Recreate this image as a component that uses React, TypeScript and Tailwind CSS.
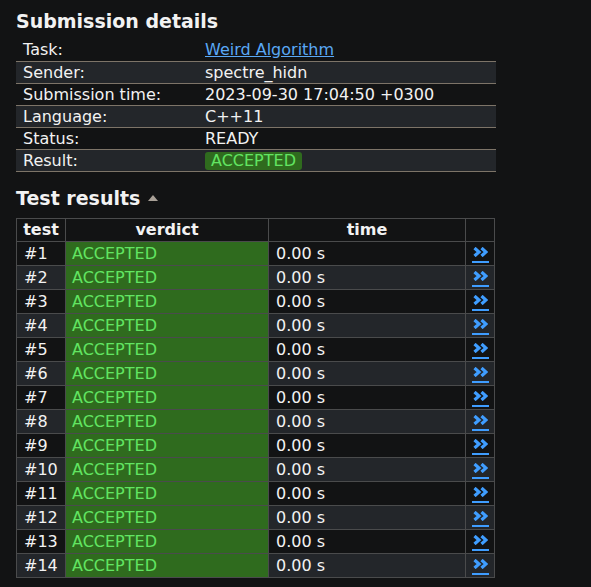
import React from 'react';

const details: [string, React.ReactNode][] = [
  ['Task:', <a href="#" className="text-[#5aa8f5] underline">Weird Algorithm</a>],
  ['Sender:', 'spectre_hidn'],
  ['Submission time:', '2023-09-30 17:04:50 +0300'],
  ['Language:', 'C++11'],
  ['Status:', 'READY'],
  [
    'Result:',
    <span className="inline-block rounded-[3px] bg-[#2f6b1e] px-[6px] leading-[18px] text-[#62e562]">ACCEPTED</span>,
  ],
];

const tests = Array.from({ length: 14 }, (_, i) => i + 1);

function DetailLink() {
  return (
    <a href="#" className="inline-flex flex-col items-center gap-[4px] pt-[5px]">
      <svg width="15" height="10" viewBox="0 0 15 10">
        <path d="M1.5 1 L6 5 L1.5 9 M8.5 1 L13 5 L8.5 9" fill="none" stroke="#3f9dff" strokeWidth="3.2" />
      </svg>
      <span className="block h-[2px] w-[17px] bg-[#3f9dff]" />
    </a>
  );
}

export default function App() {
  return (
    <div
      className="min-h-[587px] w-[591px] bg-[#121314] px-4 pt-[9px] text-[16px] text-[#f2f2f2]"
      style={{ fontFamily: '"DejaVu Sans", Verdana, sans-serif' }}
    >
      <h2 className="text-[19px] font-bold leading-[24px]">Submission details</h2>

      <table className="mt-[6px] w-[480px] border-collapse">
        <tbody>
          {details.map(([k, v], i) => (
            <tr key={i} className={`border-b border-[#7d7468] ${i % 2 === 1 ? 'bg-[#23262a]' : ''}`}>
              <td className="h-[22px] w-[189px] p-0 pl-[7px] leading-[21px]">{k}</td>
              <td className="h-[22px] p-0 leading-[21px]">{v}</td>
            </tr>
          ))}
        </tbody>
      </table>

      <h2 className="mt-[14px] flex items-center gap-[8px] text-[19px] font-bold leading-[24px]">
        Test results
        <svg width="10" height="6" viewBox="0 0 10 6" className="mt-[1px]">
          <path d="M0 6 L5 0 L10 6 Z" fill="#a8a097" />
        </svg>
      </h2>

      <table className="mt-[8px] w-[479px] border-collapse border border-[#4a4b4c]">
        <thead>
          <tr>
            <th className="h-[23px] w-[49px] border border-[#4a4b4c] p-0 font-bold leading-[22px]">test</th>
            <th className="w-[203px] border border-[#4a4b4c] p-0 font-bold leading-[22px]">verdict</th>
            <th className="w-[197px] border border-[#4a4b4c] p-0 font-bold leading-[22px]">time</th>
            <th className="border border-[#4a4b4c] p-0"></th>
          </tr>
        </thead>
        <tbody>
          {tests.map((n) => (
            <tr key={n} className={n % 2 === 0 ? 'bg-[#23262a]' : ''}>
              <td className="h-[24px] border border-[#4a4b4c] p-0 pl-[7px] leading-[23px]">#{n}</td>
              <td className="border border-[#4a4b4c] bg-[#2f6b1e] p-0 pl-[6px] leading-[23px] text-[#62e562]">ACCEPTED</td>
              <td className="border border-[#4a4b4c] p-0 pl-[7px] leading-[23px]">0.00 s</td>
              <td className="h-[24px] border border-[#4a4b4c] p-0 pl-[6px] align-top leading-[0]">
                <DetailLink />
              </td>
            </tr>
          ))}
        </tbody>
      </table>
    </div>
  );
}
